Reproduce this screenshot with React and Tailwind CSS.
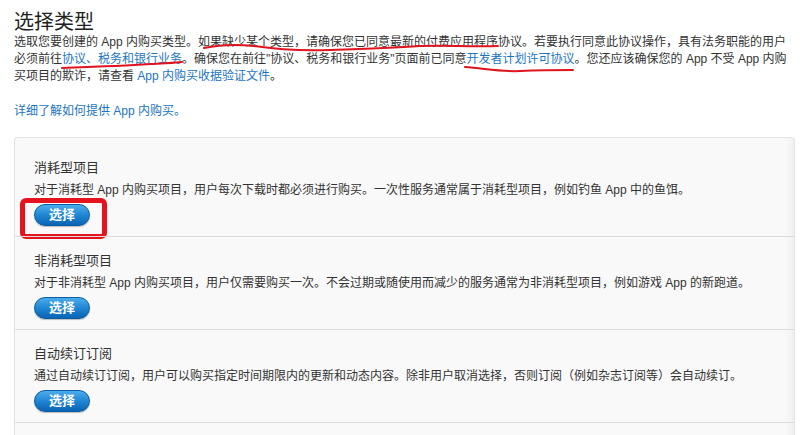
import React from "react";

const font = { fontFamily: '"Liberation Sans", "Noto Sans CJK SC", sans-serif' };

function SelectButton() {
  return (
    <button className="block w-[56px] h-[22px] rounded-full border border-[#0a5ca3] bg-gradient-to-b from-[#4badec] via-[#1f86d3] to-[#0a64b3] text-white text-[13px] font-bold leading-[20px] text-center shadow-[0_1px_1px_rgba(0,0,0,0.25)]">
      选择
    </button>
  );
}

function Section({ title, desc, first, annotate }) {
  return (
    <div
      className={
        "relative px-[19px] " +
        (first ? "pt-[20px] pb-[10px]" : "border-t border-[#dcdcdc] pt-[14px] pb-[10px]")
      }
    >
      <div className="text-[13px] leading-[20px] text-[#333] whitespace-nowrap">{title}</div>
      <div className="mt-[2px] text-[12px] leading-[20px] text-[#333] whitespace-nowrap">{desc}</div>
      <div className="mt-[4px]">
        <SelectButton />
      </div>
      {annotate && (
        <div className="absolute left-[5px] top-[60px] w-[87px] h-[41px] border-[5px] border-[#e5131d] rounded-[6px]" />
      )}
    </div>
  );
}

export default function App() {
  return (
    <div className="w-[800px] h-[435px] overflow-hidden bg-white" style={font}>
      <div className="relative px-[14px]">
        <h1 className="pt-[10px] text-[20px] leading-[24px] text-[#222] font-normal">选择类型</h1>
        <div className="text-[12px] leading-[17px] text-[#333]">
          <div className="whitespace-nowrap">
            选取您要创建的 App 内购买类型。如果缺少某个类型，请确保您已同意最新的付费应用程序协议。若要执行同意此协议操作，具有法务职能的用户
          </div>
          <div className="whitespace-nowrap">
            必须前往<span className="text-[#1b75c0]">协议、税务和银行业务</span>。确保您在前往"协议、税务和银行业务"页面前已同意
            <span className="text-[#1b75c0]">开发者计划许可协议</span>。您还应该确保您的 App 不受 App 内购
          </div>
          <div className="whitespace-nowrap">
            买项目的欺诈，请查看 <span className="text-[#1b75c0]">App 内购买收据验证文件</span>。
          </div>
        </div>
        <div className="mt-[18px] text-[12px] leading-[17px] text-[#1b75c0]">详细了解如何提供 App 内购买。</div>

        <svg
          className="absolute left-0 top-0 pointer-events-none"
          width="800"
          height="100"
          viewBox="0 0 800 100"
          fill="none"
        >
          <path
            d="M204,48 C218,45 236,44 254,46 C274,49 298,51 330,50 C365,49 395,48 420,46 C445,45 470,47 498,46"
            stroke="#e0141e"
            strokeWidth="2"
            strokeLinecap="round"
          />
          <path
            d="M62,68 C90,67 120,66 150,64 C165,63 175,63 182,62"
            stroke="#e0141e"
            strokeWidth="2"
            strokeLinecap="round"
          />
          <path
            d="M465,67 C488,69 503,72 520,71 C543,70 560,70 573,70"
            stroke="#e0141e"
            strokeWidth="2"
            strokeLinecap="round"
          />
        </svg>
      </div>

      <div className="mt-[17px] ml-[14px] w-[781px] bg-[#f9f9f9] border-t border-l border-r border-[#e3e3e3] rounded-t-[4px] shadow-[inset_-8px_0_8px_-6px_rgba(0,0,0,0.06)]">
        <Section
          first
          annotate
          title="消耗型项目"
          desc="对于消耗型 App 内购买项目，用户每次下载时都必须进行购买。一次性服务通常属于消耗型项目，例如钓鱼 App 中的鱼饵。"
        />
        <Section
          title="非消耗型项目"
          desc="对于非消耗型 App 内购买项目，用户仅需要购买一次。不会过期或随使用而减少的服务通常为非消耗型项目，例如游戏 App 的新跑道。"
        />
        <Section
          title="自动续订订阅"
          desc="通过自动续订订阅，用户可以购买指定时间期限内的更新和动态内容。除非用户取消选择，否则订阅（例如杂志订阅等）会自动续订。"
        />
        <div className="border-t border-[#dcdcdc] h-[40px]" />
      </div>
    </div>
  );
}
